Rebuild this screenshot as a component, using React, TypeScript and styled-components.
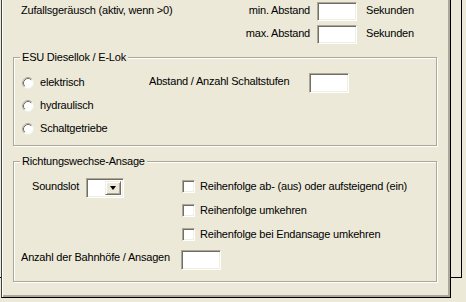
import styled, { createGlobalStyle } from 'styled-components';

const GlobalStyle = createGlobalStyle`
  html, body {
    margin: 0;
    padding: 0;
    background: #ece9d8;
  }
  body {
    width: 466px;
    height: 302px;
    overflow: hidden;
    font-family: "Liberation Sans", Arial, sans-serif;
    font-size: 11px;
    letter-spacing: -0.2px;
    color: #000;
  }
`;

const Desk = styled.div`
  position: relative;
  width: 466px;
  height: 302px;
  background: #ece9d8;
`;

// the second page peeking out behind the front one
const BackSheet = styled.div`
  position: absolute;
  left: 0;
  top: 0;
  width: 462px;
  height: 278px;
  box-sizing: border-box;
  border-right: 1px solid #000;
  border-bottom: 1px solid #000;
`;

const Sheet = styled.div`
  position: relative;
  margin-left: 1px;
  width: 450px;
  height: 298px;
  box-sizing: border-box;
  background: #ece9d8;
  border-left: 1px solid #404040;
  border-right: 1px solid #000;
  border-bottom: 1px solid #000;
  box-shadow: inset 1px 0 0 #fff, inset -2px -2px 0 #aca899;
  padding: 0 13px 0 11px;
`;

const Text = styled.span<{ $lift?: number }>`
  line-height: 13px;
  white-space: nowrap;
  margin-bottom: ${p => p.$lift ?? 0}px;
`;

const RightText = styled(Text)`
  text-align: right;
  padding-right: 7px;
`;

const UnitText = styled(Text)`
  padding-left: 9px;
`;

const sunken = `
  box-sizing: border-box;
  background: #fff;
  border: 1px solid;
  border-color: #aca899 #fff #fff #aca899;
  box-shadow: inset 1px 1px 0 #716f64, inset -1px -1px 0 #f1efe2;
`;

const Field = styled.div<{ $w?: number; $h?: number }>`
  ${sunken}
  width: ${p => p.$w ?? 40}px;
  height: ${p => p.$h ?? 20}px;
  flex: none;
`;

const TopGrid = styled.div`
  display: grid;
  grid-template-columns: 200px 96px 40px auto;
  grid-auto-rows: 19px;
  row-gap: 4px;
  align-items: center;
  padding: 2px 0 0 8px;
`;

const Group = styled.div<{ $h: number; $top: number }>`
  position: relative;
  box-sizing: border-box;
  height: ${p => p.$h}px;
  margin-top: ${p => p.$top}px;
  border: 1px solid #aca899;
  box-shadow: 1px 1px 0 #fff, inset 1px 1px 0 #fff;
`;

const Legend = styled.span`
  position: absolute;
  top: -7px;
  left: 6px;
  padding: 0 2px;
  line-height: 13px;
  background: #ece9d8;
  white-space: nowrap;
`;

const EngineBody = styled.div`
  display: flex;
  padding: 13px 0 0 8px;
`;

const RadioList = styled.div`
  display: flex;
  flex-direction: column;
  width: 127px;
`;

const OptionRow = styled.div<{ $h: number }>`
  display: flex;
  align-items: center;
  height: ${p => p.$h}px;
  gap: 6px;
`;

const LabeledRow = styled.div<{ $labelW: number }>`
  display: flex;
  align-items: center;
  height: 23px;

  & > span:first-child {
    width: ${p => p.$labelW}px;
  }
`;

const AnnounceBody = styled.div`
  display: grid;
  grid-template-columns: 168px auto;
  grid-auto-rows: 24px;
  padding-top: 12px;
`;

const SlotRow = styled.div`
  display: flex;
  align-items: center;
  padding-left: 18px;

  & > span:first-child {
    width: 54px;
  }
`;

const CheckRow = styled.div`
  grid-column: 2;
  display: flex;
  align-items: center;
  gap: 5px;
`;

const Check = styled.div`
  ${sunken}
  width: 13px;
  height: 13px;
  flex: none;
`;

const CountRow = styled.div`
  display: flex;
  align-items: center;
  margin-top: 4px;
  padding-left: 7px;

  & > span:first-child {
    width: 160px;
  }
`;

const Combo = styled.div`
  ${sunken}
  display: flex;
  justify-content: flex-end;
  width: 38px;
  height: 20px;
  margin-top: 4px;
  padding: 2px;
`;

const ComboButton = styled.div`
  display: flex;
  align-items: center;
  justify-content: center;
  width: 16px;
  height: 100%;
  box-sizing: border-box;
  background: #ece9d8;
  border: 1px solid;
  border-color: #f1efe2 #716f64 #716f64 #f1efe2;
  box-shadow: inset 1px 1px 0 #fff, inset -1px -1px 0 #aca899;

  &::after {
    content: '';
    border-left: 3.5px solid transparent;
    border-right: 3.5px solid transparent;
    border-top: 4px solid #000;
  }
`;

const Radio = () => (
  <svg width="12" height="12" viewBox="0 0 12 12" style={{ flex: 'none' }}>
    <circle cx="6" cy="6" r="5.5" fill="#fff" stroke="#f1efe2" />
    <path d="M2.11 9.89 A5.5 5.5 0 0 1 9.89 2.11" fill="none" stroke="#aca899" />
    <path d="M2.82 9.18 A4.5 4.5 0 0 1 9.18 2.82" fill="none" stroke="#716f64" />
  </svg>
);

const drives = ['elektrisch', 'hydraulisch', 'Schaltgetriebe'];
const orderOptions = [
  'Reihenfolge ab- (aus) oder aufsteigend (ein)',
  'Reihenfolge umkehren',
  'Reihenfolge bei Endansage umkehren',
];

export default function App() {
  return (
    <Desk>
      <GlobalStyle />
      <BackSheet />
      <Sheet>
        <TopGrid>
          <Text $lift={3}>Zufallsgeräusch (aktiv, wenn &gt;0)</Text>
          <RightText $lift={3}>min. Abstand</RightText>
          <Field $h={19} />
          <UnitText $lift={3}>Sekunden</UnitText>
          <span />
          <RightText $lift={3}>max. Abstand</RightText>
          <Field $h={19} />
          <UnitText $lift={3}>Sekunden</UnitText>
        </TopGrid>

        <Group $h={89} $top={13}>
          <Legend>ESU Diesellok / E-Lok</Legend>
          <EngineBody>
            <RadioList>
              {drives.map(d => (
                <OptionRow key={d} $h={23}>
                  <Radio />
                  <Text>{d}</Text>
                </OptionRow>
              ))}
            </RadioList>
            <LabeledRow $labelW={160}>
              <Text $lift={2}>Abstand / Anzahl Schaltstufen</Text>
              <Field />
            </LabeledRow>
          </EngineBody>
        </Group>

        <Group $h={121} $top={15}>
          <Legend>Richtungswechse-Ansage</Legend>
          <AnnounceBody>
            <SlotRow>
              <Text>Soundslot</Text>
              <Combo>
                <ComboButton />
              </Combo>
            </SlotRow>
            {orderOptions.map(o => (
              <CheckRow key={o}>
                <Check />
                <Text>{o}</Text>
              </CheckRow>
            ))}
          </AnnounceBody>
          <CountRow>
            <Text $lift={5}>Anzahl der Bahnhöfe / Ansagen</Text>
            <Field />
          </CountRow>
        </Group>
      </Sheet>
    </Desk>
  );
}
